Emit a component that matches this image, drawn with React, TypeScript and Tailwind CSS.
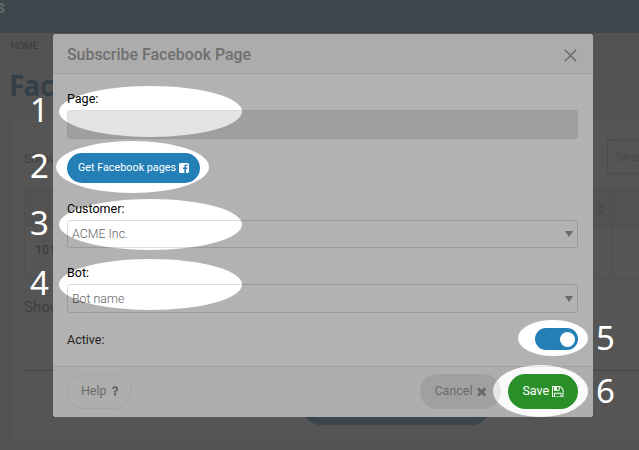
import type { ReactNode } from "react";

const roboto = "font-[Roboto,'Liberation_Sans',sans-serif]";

function Glyph({ box, d, className }: { box: string; d: string; className: string }) {
  return (
    <svg viewBox={box} className={className} fill="currentColor" aria-hidden="true">
      <path d={d} />
    </svg>
  );
}

const FACEBOOK =
  "M1376 128q119 0 203.5 84.5t84.5 203.5v960q0 119-84.5 203.5t-203.5 84.5h-188v-595h199l30-232h-229v-148q0-56 23.5-84t91.5-28l122-1v-207q-63-9-178-9-136 0-217.5 80t-81.5 226v171h-200v232h200v595h-532q-119 0-203.5-84.5t-84.5-203.5v-960q0-119 84.5-203.5t203.5-84.5h960z";
const FLOPPY =
  "M384 1536h768v-384h-768v384zM1280 1536h128v-896q0-14-10-38.5t-20-34.5l-281-281q-10-10-34-20t-39-10v416q0 40-28 68t-68 28h-576q-40 0-68-28t-28-68v-416h-128v1280h128v-416q0-40 28-68t68-28h832q40 0 68 28t28 68v416zM896 608v-320q0-13-9.5-22.5t-22.5-9.5h-192q-13 0-22.5 9.5t-9.5 22.5v320q0 13 9.5 22.5t22.5 9.5h192q13 0 22.5-9.5t9.5-22.5zM1536 640v928q0 40-28 68t-68 28h-1344q-40 0-68-28t-28-68v-1344q0-40 28-68t68-28h928q40 0 88 20t76 48l280 280q28 28 48 76t20 88z";
const TIMES =
  "M1490 1322q0 40-28 68l-136 136q-28 28-68 28t-68-28l-294-294-294 294q-28 28-68 28t-68-28l-136-136q-28-28-28-68t28-68l294-294-294-294q-28-28-28-68t28-68l136-136q28-28 68-28t68 28l294 294 294-294q28-28 68-28t68 28l136 136q28 28 28 68t-28 68l-294 294 294 294q28 28 28 68z";
const QUESTION =
  "M1088 1256v240q0 16-12 28t-28 12h-240q-16 0-28-12t-12-28v-240q0-16 12-28t28-12h240q16 0 28 12t12 28zm316-600q0 54-15.5 101t-35 76.5-55 59.5-57.5 43.5-61 35.5q-41 23-68.5 65t-27.5 67q0 17-12 32.5t-28 15.5h-240q-15 0-25.5-18.5t-10.5-37.5v-45q0-83 65-156.5t143-108.5q59-27 84-56t25-76q0-42-46.5-74t-107.5-32q-65 0-108 29-35 25-107 115-13 16-31 16-12 0-25-8l-164-125q-13-10-15.5-25t5.5-28q160-266 464-266 80 0 161 31t146 83 106 127.5 41 158.5z";

// Areas of the dialog left undimmed, in dialog coordinates.
const spotlights = [
  { cx: 97.5, cy: 77.5, rx: 91.5, ry: 25.5 },
  { cx: 79.5, cy: 133, rx: 76.5, ry: 26 },
  { cx: 97.5, cy: 190.5, rx: 91.5, ry: 25.5 },
  { cx: 97.5, cy: 250.5, rx: 91.5, ry: 25.5 },
  { cx: 500, cy: 304, rx: 35, ry: 18 },
  { cx: 487.5, cy: 357, rx: 47.5, ry: 26 },
];

function Spotlights() {
  return (
    <svg className="pointer-events-none absolute inset-0 h-full w-full" viewBox="0 0 540 383">
      <mask id="lit">
        <rect width="540" height="383" fill="white" />
        {spotlights.map((s, i) => (
          <ellipse key={i} {...s} fill="black" />
        ))}
      </mask>
      <rect width="540" height="383" fill="black" fillOpacity="0.3" mask="url(#lit)" />
    </svg>
  );
}

function Select({ children }: { children: ReactNode }) {
  return (
    <div className="flex h-full items-center justify-between rounded-[3px] border border-[#dcdcdc] pr-1 pl-1 text-[12.4px] font-light text-[#666]">
      <span>{children}</span>
      <span className="h-0 w-0 border-x-[4px] border-t-[6px] border-x-transparent border-t-[#9a9a9a]" />
    </div>
  );
}

function Dialog() {
  return (
    <section className="absolute top-[34px] left-[53px] flex h-[383px] w-[540px] flex-col overflow-hidden rounded-[4px] bg-white text-[#222]">
      <header className="flex h-10 items-center justify-between border-b border-[#e2e2e2] bg-[#f7f7f7] pr-4 pl-3.5 text-[#999]">
        <h2 className="pt-[3px] text-[15.9px] leading-5 font-medium text-[#a0a0a0]">Subscribe Facebook Page</h2>
        <svg viewBox="0 0 13 13" className="mt-[3px] h-[13px] w-[13px] stroke-[#999]" strokeWidth="1.5">
          <path d="M.8.8l11.4 11.4M12.2.8L.8 12.2" />
        </svg>
      </header>
      <div className="flex h-[292px] flex-col pr-[15px] pl-3.5 text-[12.5px] leading-4">
        <label className="mt-[17px] text-black">Page:</label>
        <div className="mt-[3px] h-[29px] shrink-0 rounded-[3px] border border-[#dcdcdc] bg-[#e4e4e4]" />
        <button className="mt-3.5 flex h-[30px] w-[133px] shrink-0 items-center justify-center gap-[3px] rounded-full bg-[#257fb7] text-[10.8px] text-white">
          Get Facebook pages
          <Glyph box="128 128 1536 1536" d={FACEBOOK} className="h-2.5 w-2.5" />
        </button>
        <label className="mt-[18px] text-black">Customer:</label>
        <div className="mt-[3px] h-7 shrink-0"><Select>ACME Inc.</Select></div>
        <label className="mt-[17px] text-black">Bot:</label>
        <div className="mt-[3px] h-[29px] shrink-0"><Select>Bot name</Select></div>
        <div className="mt-[15px] flex h-[22px] shrink-0 items-center justify-between">
          <span className="pt-0.5 text-[#333]">Active:</span>
          <span className="flex h-[22px] w-[43px] items-center justify-end rounded-full bg-[#257fb7] pr-[3px]">
            <span className="h-[15px] w-[15px] rounded-full bg-white" />
          </span>
        </div>
      </div>
      <footer className="flex h-[51px] items-start border-t border-[#e2e2e2] bg-[#fafafa] pt-[7px] pr-[15px] pl-3.5 text-[12.5px] text-[#999]">
        <button className="flex h-[35px] w-[65px] items-center justify-center gap-1 rounded-full border border-[#ececec] text-[#999]">
          Help <Glyph box="384 256 1024 1280" d={QUESTION} className="mb-px h-[9.5px] w-[7.6px]" />
        </button>
        <button className="ml-auto flex h-[35px] w-[81px] items-center justify-center gap-1 rounded-full bg-[#e6e6e6] pr-px text-[#999]">
          Cancel <Glyph box="302 302 1188 1252" d={TIMES} className="h-[9.5px] w-[9px]" />
        </button>
        <button className="ml-[7px] flex h-[35px] w-[70px] items-center justify-center gap-[3px] rounded-full bg-[#298f29] text-white">
          Save <Glyph box="0 128 1536 1536" d={FLOPPY} className="h-[11.5px] w-[11.5px]" />
        </button>
      </footer>
      <Spotlights />
    </section>
  );
}

function PageBehind() {
  return (
    <div className="flex h-full flex-col">
      <header className="h-[33px] shrink-0 bg-[#3c464d] text-[18px] leading-[14px] text-[#666]">
        <span className="-ml-[4px] block h-4 font-bold">s</span>
      </header>
      <nav className="mt-[6px] flex h-3 shrink-0 gap-[11px] pl-[10.5px] text-[9.7px] leading-[13px] text-[#353a3e]">
        <span>HOME</span>
        <span className="text-[#454545]">/</span>
      </nav>
      <h1 className="mt-[16px] h-9 shrink-0 pl-[9px] font-['Open_Sans',sans-serif] text-[28px] leading-9 font-bold tracking-[-0.8px] text-[#343f47]">
        Facebook
      </h1>
      <main className="mt-[13px] ml-[9px] flex h-[324px] shrink-0 flex-col rounded-l-[3px] border border-r-0 border-[#505050] bg-[#555] pl-[14px] text-[#404040]">
        <div className="flex h-[73px] items-start justify-between pt-[22px] text-[12.5px]">
          <span className="pt-[9px] leading-[22px] text-[#424242]">Show</span>
          <div className="flex h-[35px] w-[32px] items-center overflow-hidden rounded-l-[3px] border border-r-0 border-[#4b4b4b] pl-[7px] text-[13.5px] text-[#4b4b4b]">
            Search
          </div>
        </div>
        <div className="flex h-[89px] flex-col border border-r-0 border-[#4f4f4f]">
          <div className="flex h-[35px] shrink-0 justify-end border-b border-[#4f4f4f] bg-[#525252]">
            <div className="flex w-5 flex-col items-center justify-center gap-[1px] border-r border-[#4f4f4f] pr-px">
              <span className="border-x-[3px] border-b-[6px] border-x-transparent border-b-[#4b4b4b]" />
              <span className="border-x-[3px] border-t-[6px] border-x-transparent border-t-[#4b4b4b]" />
            </div>
            <div className="w-[27px]" />
          </div>
          <div className="flex h-[53px] items-center justify-between pl-2.5 text-[12.5px] text-[#383838]">
            <span className="pb-1">101</span>
            <span className="mr-[27px] h-full border-r border-[#4f4f4f]" />
          </div>
        </div>
        <div className="h-[92px] border-b border-[#444] pt-4 text-[15px] leading-6">Showing</div>
        <div className="mt-[18px] ml-[279px] h-9 w-[187px] rounded-full bg-[#3b464c]" />
      </main>
    </div>
  );
}

const markers = [
  { n: "1", at: "left-[30px] top-[91px]" },
  { n: "2", at: "left-[30px] top-[147px]" },
  { n: "3", at: "left-[30px] top-[204px]" },
  { n: "4", at: "left-[30px] top-[264px]" },
  { n: "5", at: "left-[596px] top-[319px]" },
  { n: "6", at: "left-[596px] top-[372px]" },
];

export default function App() {
  return (
    <div className={`relative h-[450px] w-[639px] overflow-hidden bg-[#535353] ${roboto}`}>
      <PageBehind />
      <Dialog />
      {markers.map(({ n, at }) => (
        <span key={n} className={`absolute ${at} w-[19px] text-center font-['Noto_Sans',sans-serif] text-[33px] leading-[38px] text-white`}>
          {n}
        </span>
      ))}
    </div>
  );
}
